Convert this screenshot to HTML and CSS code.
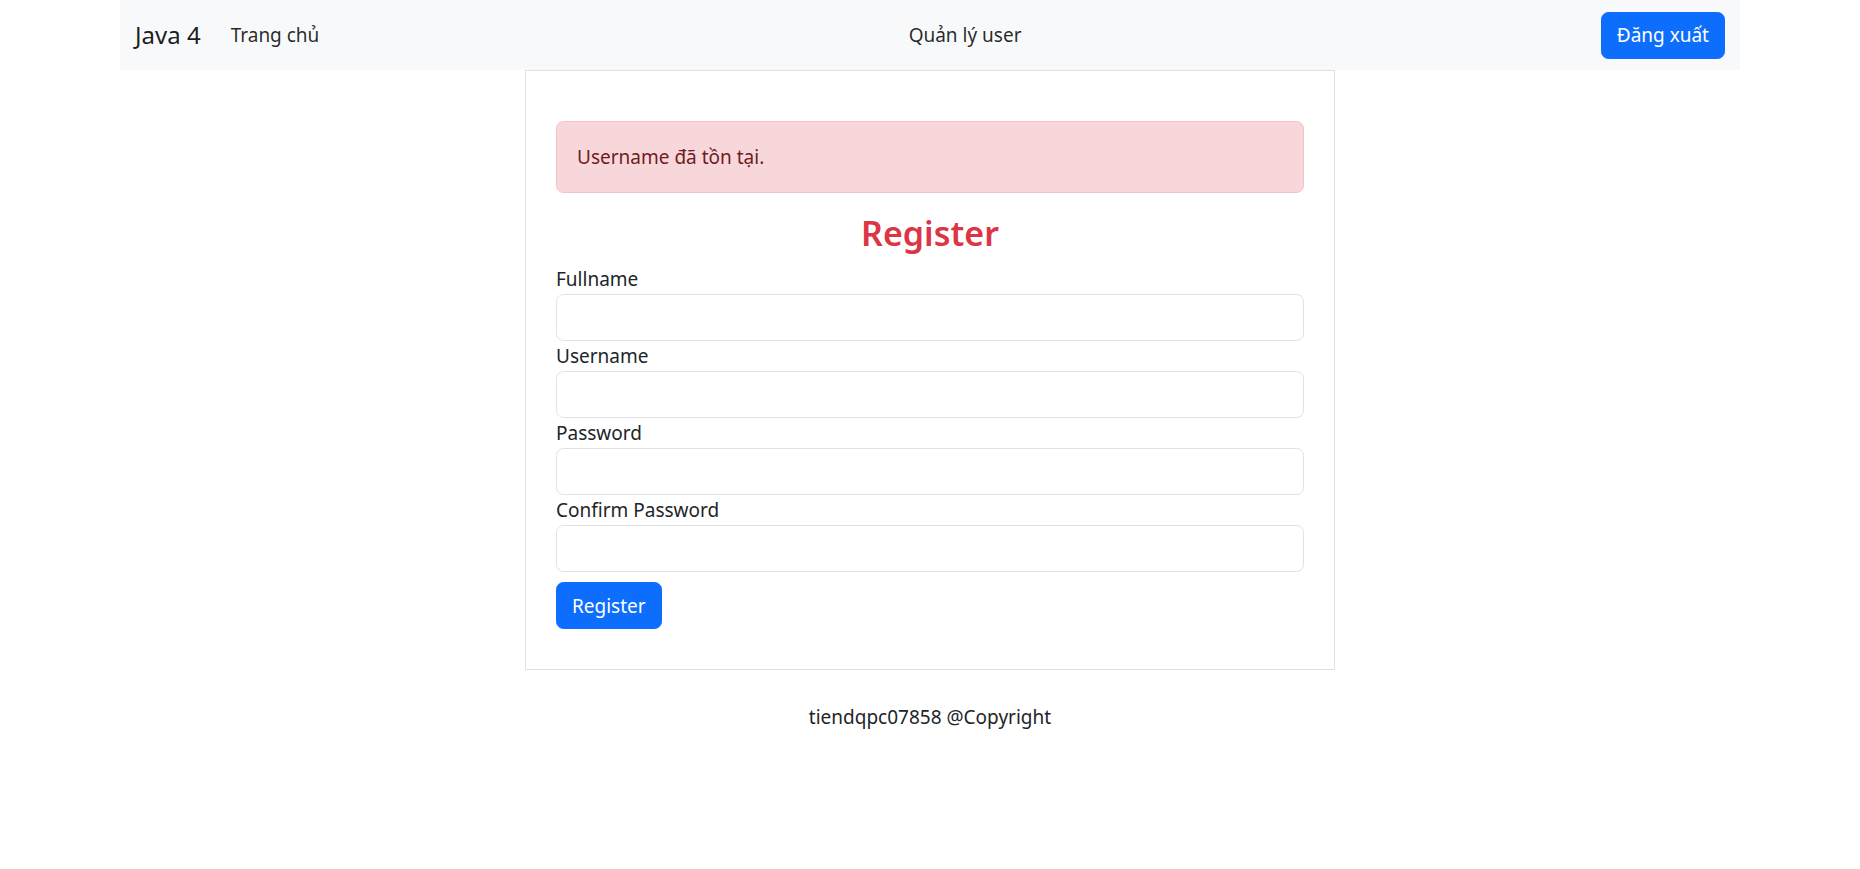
FILE: index.html
```html
<!DOCTYPE html>
<html lang="vi">
<head>
<meta charset="utf-8">
<title>Register</title>
<link rel="stylesheet" href="styles.css">
</head>
<body>
<div class="container">
  <nav class="navbar">
    <div class="nav-left">
      <a class="brand" href="#">Java 4</a>
      <a class="nav-link" href="#">Trang chủ</a>
    </div>
    <a class="nav-link" href="#">Quản lý user</a>
    <button class="btn btn-primary nav-btn">Đăng xuất</button>
  </nav>
  <main class="card">
    <div class="alert">Username đã tồn tại.</div>
    <h3 class="title">Register</h3>
    <form class="form">
      <label class="label">Fullname</label>
      <input class="input" type="text">
      <label class="label">Username</label>
      <input class="input" type="text">
      <label class="label">Password</label>
      <input class="input" type="password">
      <label class="label">Confirm Password</label>
      <input class="input" type="password">
      <div class="actions"><button class="btn btn-primary" type="button">Register</button></div>
    </form>
  </main>
  <footer class="footer">tiendqpc07858 @Copyright</footer>
</div>
</body>
</html>
```
FILE: styles.css
```css
* { box-sizing: border-box; }
html, body { margin: 0; padding: 0; }
body {
  font-family: "Noto Sans", "Open Sans", sans-serif;
  font-size: 19px;
  line-height: 30px;
  color: #212529;
  background: #fff;
}
.container {
  width: 1650px;
  margin: 0 auto;
  padding: 0 15px;
}
.navbar {
  height: 70px;
  background: #f8f9fa;
  display: flex;
  align-items: center;
  justify-content: space-between;
  padding: 0 15px;
}
.nav-left { display: flex; align-items: center; }
.brand {
  font-size: 24px;
  color: rgba(0,0,0,.9);
  text-decoration: none;
  margin-right: 20px;
}
.nav-link {
  font-size: 19px;
  color: rgba(0,0,0,.85);
  text-decoration: none;
  padding: 10px 10px;
}
.btn {
  font-family: inherit;
  font-size: 19px;
  line-height: 30px;
  border: 1px solid transparent;
  border-radius: 7.5px;
  padding: 7px 15px;
  height: 47px;
  cursor: pointer;
}
.btn-primary { background: #0d6efd; color: #fff; border-color: #0d6efd; }
.card {
  width: 810px;
  margin: 0 auto;
  border: 1px solid #dee2e6;
  padding: 50px 30px 40px;
}
.alert {
  background: #f8d7da;
  border: 1px solid #f5c2c7;
  color: #6e1c24;
  border-radius: 7.5px;
  padding: 20px;
  margin-bottom: 20px;
}
.title {
  margin: 0 0 10px;
  text-align: center;
  color: #dc3545;
  font-size: 34px;
  font-weight: 600;
  line-height: 41px;
}
.form { display: flex; flex-direction: column; }
.label { display: block; height: 30px; }
.input {
  display: block;
  width: 100%;
  height: 47px;
  border: 1px solid #dee2e6;
  border-radius: 7.5px;
  font: inherit;
  padding: 7px 15px;
}
.actions { margin-top: 10px; }
.footer {
  text-align: center;
  padding: 32px 0 25px;
}
```
